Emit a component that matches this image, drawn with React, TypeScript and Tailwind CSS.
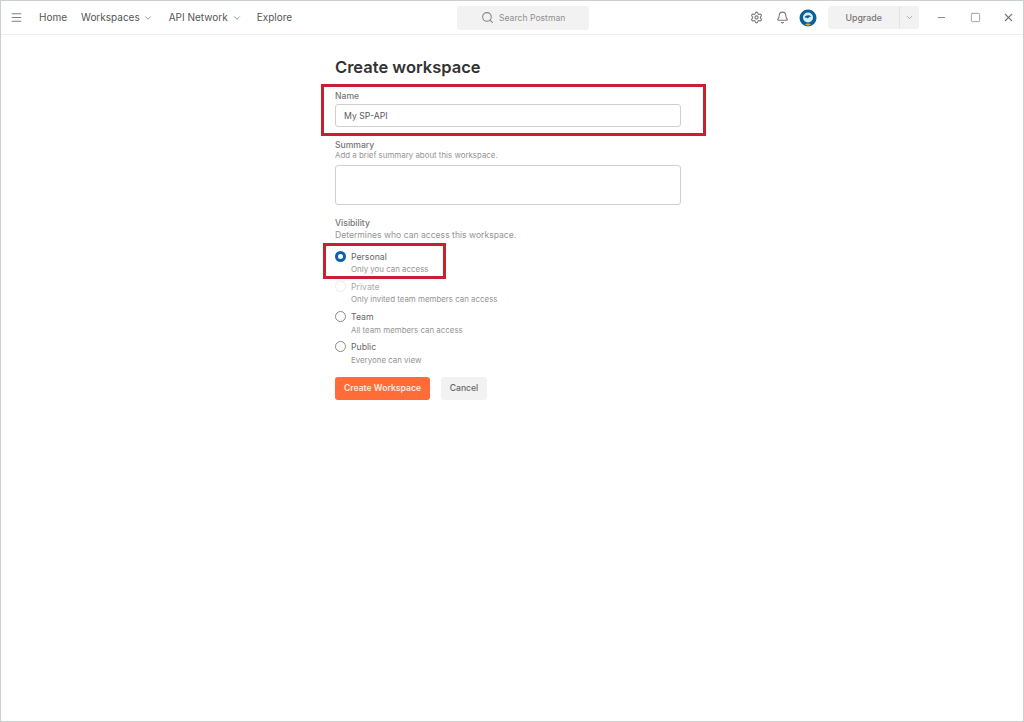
import React from 'react';
import { Menu, ChevronDown, Settings, Bell, Search, Minus, Square, X } from 'lucide-react';

const options = [
  { label: 'Personal', hint: 'Only you can access', state: 'checked' },
  { label: 'Private', hint: 'Only invited team members can access', state: 'disabled' },
  { label: 'Team', hint: 'All team members can access', state: 'idle' },
  { label: 'Public', hint: 'Everyone can view', state: 'idle' },
];

const Radio = ({ state }: { state: string }) => {
  if (state === 'checked') return <span className="w-[11px] h-[11px] rounded-full border-[3px] border-[#0f5fb0] bg-white shrink-0" />;
  if (state === 'disabled') return <span className="w-[11px] h-[11px] rounded-full border border-[#ededed] bg-white shrink-0" />;
  return <span className="w-[11px] h-[11px] rounded-full border border-[#8a8a8a] bg-white shrink-0" />;
};

const Avatar = () => (
  <svg width="18" height="18" viewBox="0 0 18 18">
    <circle cx="9" cy="9" r="8.5" fill="#0b5f92" />
    <circle cx="9" cy="8.5" r="5" fill="#d8eef7" />
    <path d="M5.5 8.5c1-2.5 5.5-3 7-.5-1.5-.5-2.5 0-3.5 1.5-1-.8-2.2-1.2-3.5-1z" fill="#0b5f92" />
    <path d="M6 15.5c1.5-1.5 4.5-1.5 6 0-1.5 1.5-4.5 1.5-6 0z" fill="#d9a441" />
  </svg>
);

export default function App() {
  return (
    <div className="h-[722px] w-[1024px] bg-white border border-[#c9d0ce] font-['Inter',sans-serif] text-[#3a3a3a] overflow-hidden whitespace-nowrap">
      <div className="h-[34px] flex items-center border-b border-[#efefef]">
        <Menu size={13} className="ml-[9px] text-[#808080]" />
        <nav className="flex items-center text-[10px] text-[#555555] ml-[16px]">
          <span>Home</span>
          <span className="ml-[14px]">Workspaces</span>
          <ChevronDown size={10} className="ml-[3px] text-[#808080]" />
          <span className="ml-[16px]">API Network</span>
          <ChevronDown size={10} className="ml-[4px] text-[#808080]" />
          <span className="ml-[15px]">Explore</span>
        </nav>
        <div className="ml-[165px] w-[132px] h-[24px] rounded-[3px] bg-[#f2f2f2] flex items-center justify-center gap-[5px] text-[8.6px] text-[#8f8f8f]">
          <Search size={13} className="text-[#858585]" />
          <span className="pt-[1px]">Search Postman</span>
        </div>
        <Settings size={13} className="ml-[161px] text-[#7a7a7a]" />
        <Bell size={13} className="ml-[13px] text-[#7a7a7a]" />
        <div className="ml-[10px]"><Avatar /></div>
        <div className="ml-[11px] flex h-[23px] w-[91px] rounded-[3px] bg-[#f2f2f2] items-center">
          <span className="w-[71px] text-center text-[8.8px] font-medium text-[#767676]">Upgrade</span>
          <span className="h-full border-l border-[#e4e4e4] flex-1 flex items-center justify-center">
            <ChevronDown size={9} className="text-[#8f8f8f]" />
          </span>
        </div>
        <Minus size={11} className="ml-[17px] text-[#808080]" />
        <Square size={11} className="ml-[23px] text-[#999999]" />
        <X size={13} className="ml-[21px] text-[#777777]" />
      </div>

      <main className="ml-[334px] w-[346px] pt-[21px]">
        <h1 className="text-[16.5px] leading-[22px] font-semibold text-[#333333]">Create workspace</h1>

        <div className="relative mt-[12px]">
          <div className="absolute left-[-14px] right-[-25px] top-[-6px] h-[52px] border-[3px] border-[#c9202f]" />
          <label className="block text-[8.6px] leading-[12px] font-medium text-[#767676]">Name</label>
          <div className="mt-[2px] h-[23px] flex items-center px-[8px] pt-[2px] rounded-[3px] border border-[#cfcfcf] text-[8.7px] text-[#5a5a5a]">My SP-API</div>
        </div>

        <label className="block mt-[12px] text-[8.6px] leading-[12px] font-medium text-[#767676]">Summary</label>
        <p className="-mt-[1px] text-[7.9px] leading-[11px] text-[#949494]">Add a brief summary about this workspace.</p>
        <div className="mt-[4px] h-[40px] rounded-[3px] border border-[#cfcfcf]" />

        <label className="block mt-[12px] text-[8.6px] leading-[12px] font-medium text-[#767676]">Visibility</label>
        <p className="text-[8.6px] leading-[12px] text-[#949494]">Determines who can access this workspace.</p>

        <div className="relative mt-[9px] flex flex-col gap-[7.3px]">
          <div className="absolute left-[-12px] top-[-7px] w-[123px] h-[36px] border-[3px] border-[#c9202f]" />
          {options.map((o) => (
            <div key={o.label} className="h-[23px]">
              <div className="flex items-center gap-[5px] h-[12px]">
                <Radio state={o.state} />
                {o.state === 'checked' && <span className="pt-[3px] text-[8.7px] text-[#666666]">{o.label}</span>}
                {o.state === 'disabled' && <span className="pt-[2px] text-[8.7px] text-[#aaaaaa]">{o.label}</span>}
                {o.state === 'idle' && <span className="pt-[2px] text-[8.7px] text-[#666666]">{o.label}</span>}
              </div>
              <p className="ml-[16px] mt-[2px] text-[7.9px] leading-[11px] text-[#949494]">{o.hint}</p>
            </div>
          ))}
        </div>

        <div className="mt-[13px] flex gap-[11px]">
          <button className="h-[23px] w-[95px] pt-[1px] rounded-[3px] bg-[#ff6c37] text-[#ffe9df] text-[8.6px] font-semibold">Create Workspace</button>
          <button className="h-[23px] w-[46px] pt-[1px] rounded-[3px] bg-[#f2f2f2] text-[#666666] text-[8.6px] font-medium">Cancel</button>
        </div>
      </main>
    </div>
  );
}
